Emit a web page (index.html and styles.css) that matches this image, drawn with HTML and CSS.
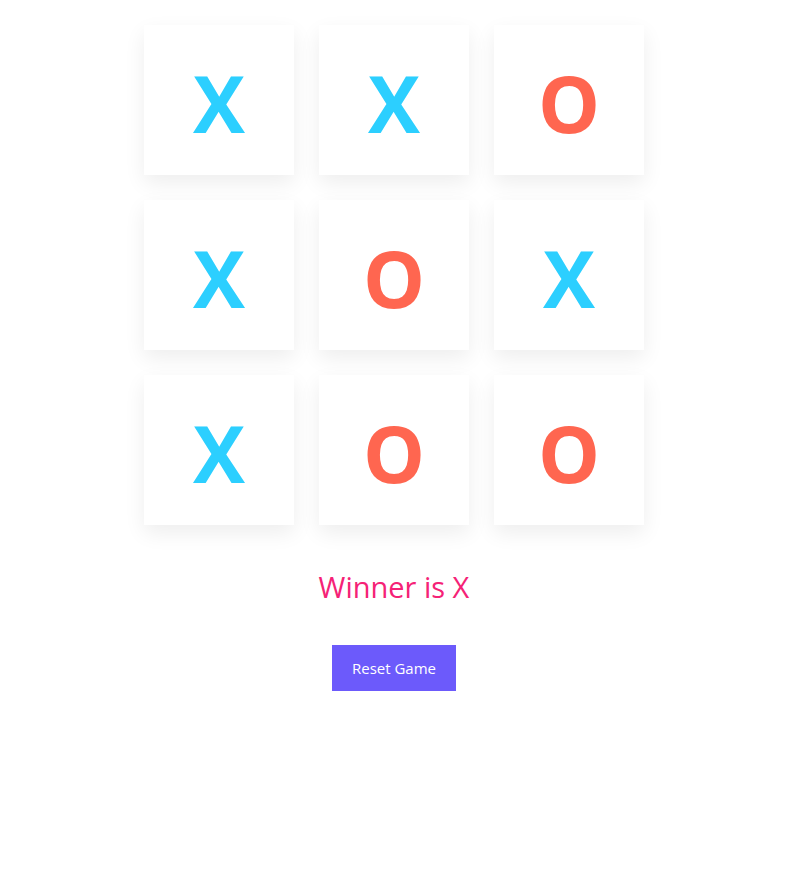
FILE: index.html
```html
<!DOCTYPE html>
<html>
<head>
<meta charset="utf-8">
<link rel="stylesheet" href="styles.css">
</head>
<body>
<div class="app">
  <div class="board">
    <div class="cell x">X</div>
    <div class="cell x">X</div>
    <div class="cell o">O</div>
    <div class="cell x">X</div>
    <div class="cell o">O</div>
    <div class="cell x">X</div>
    <div class="cell x">X</div>
    <div class="cell o">O</div>
    <div class="cell o">O</div>
  </div>
  <div class="status">Winner is X</div>
  <button class="reset">Reset Game</button>
</div>
</body>
</html>
```
FILE: styles.css
```css
html, body {
  margin: 0;
  padding: 0;
  background: #fff;
}
.app {
  width: 788px;
  display: flex;
  flex-direction: column;
  align-items: center;
  padding-top: 25px;
  font-family: "Open Sans", "Noto Sans", sans-serif;
}
.board {
  display: grid;
  grid-template-columns: repeat(3, 150px);
  grid-auto-rows: 150px;
  gap: 25px;
}
.cell {
  background: #fff;
  box-shadow: 0 8px 20px rgba(0, 0, 0, 0.07);
  display: flex;
  align-items: center;
  justify-content: center;
  font-weight: 700;
  font-size: 78px;
  line-height: 1;
  padding-top: 6px;
  box-sizing: border-box;
}
.cell.x { color: #2ccfff; }
.cell.o { color: #ff6650; }
.status {
  margin-top: 42px;
  color: #f52276;
  font-size: 29px;
  line-height: 40px;
}
.reset {
  margin-top: 38px;
  width: 124px;
  height: 46px;
  border: none;
  background: #6c5afb;
  color: #fff;
  font-family: "Open Sans", "Noto Sans", sans-serif;
  font-size: 15px;
  padding: 0;
}
```
